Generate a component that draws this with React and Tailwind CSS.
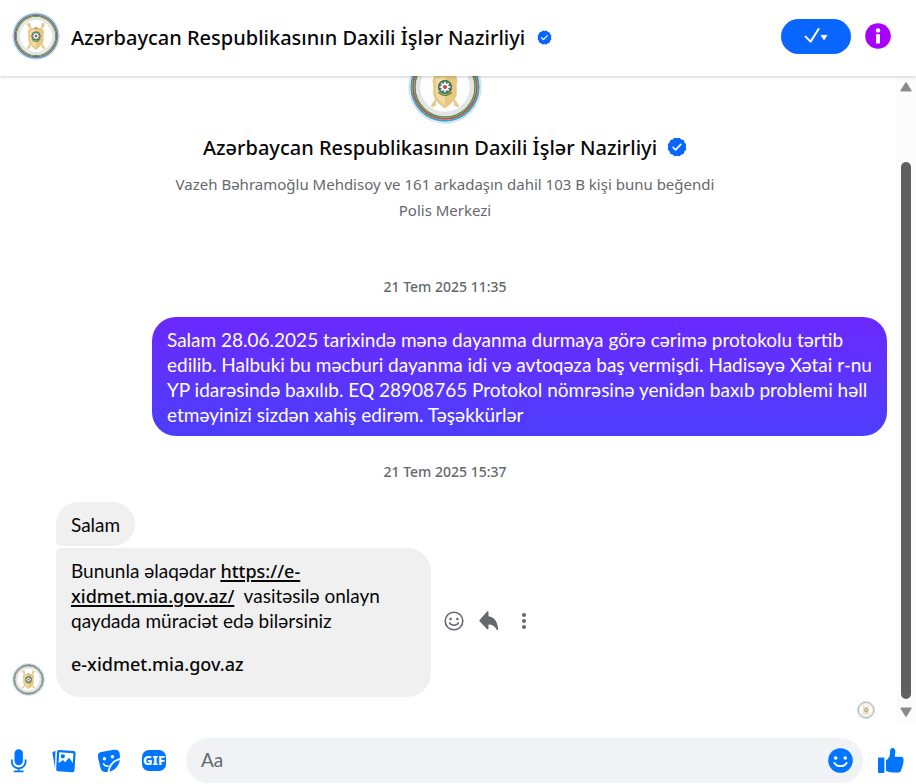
import React from "react";

const PAGE_NAME = "Azərbaycan Respublikasının Daxili İşlər Nazirliyi";

function Emblem({ className }) {
  const star = Array.from({ length: 8 }, (_, i) => i * 45);
  return (
    <svg viewBox="0 0 100 100" className={className} role="img" aria-label={PAGE_NAME}>
      <circle cx="50" cy="50" r="49.5" fill="#d3dbdf" />
      <circle cx="50" cy="50" r="48" fill="#eef3f5" />
      <circle cx="50" cy="50" r="45.5" fill="#fff" stroke="#35a3cf" strokeWidth="2.6" />
      <circle cx="50" cy="50" r="43" fill="none" stroke="#b9534b" strokeWidth="2.6" />
      <circle cx="50" cy="50" r="40.5" fill="none" stroke="#4f9b4c" strokeWidth="2.4" />
      <circle cx="50" cy="50" r="36.5" fill="#fff" stroke="#e4e4e6" strokeWidth="6" />
      <g stroke="#e3c583" strokeWidth="3" strokeLinecap="round">
        <path d="M34 26 67 75M66 26 33 75" />
      </g>
      <g fill="#e5c98c">
        <path d="m31 24 7-1 1 6-5 4zM69 24l-7-1-1 6 5 4zM31 77l3-7 5 3-3 3zM69 77l-3-7-5 3 3 3z" />
      </g>
      <path d="M35 35c5 0 9-2 15-4 6 2 10 4 15 4l2 7c-2 4-1 11-1 17-1 8-9 15-16 20-7-5-15-12-16-20 0-6 1-13-1-17z" fill="#e6c880" />
      <path d="M38 38c5 0 8-2 12-3v40c-6-5-12-10-12-17 0-6 0-12-1-16z" fill="#f1dba4" />
      <path d="M45 35h10l-5-3z" fill="#d26a52" />
      <circle cx="50" cy="50" r="9.5" fill="#315e4d" />
      <circle cx="50" cy="50" r="7.8" fill="#4f8f7c" />
      <g fill="#fff">
        {star.map((a) => (
          <path key={a} d="m50 41.5 2 5.5h-4z" transform={`rotate(${a} 50 50)`} />
        ))}
      </g>
      <circle cx="50" cy="50" r="4" fill="#fff" />
      <circle cx="50" cy="50" r="2.8" fill="#d6404f" />
      <path d="M41 57q9 9 18 0" fill="none" stroke="#5f7e3c" strokeWidth="2" />
    </svg>
  );
}

function Verified({ className }) {
  return (
    <svg viewBox="0 0 24 24" className={className} role="img" aria-label="Doğrulanmış hesap">
      <g fill="#0866ff">
        <circle cx="12" cy="12" r="10.6" />
        {[0, 30, 60].map((a) => (
          <rect key={a} x="3.4" y="3.4" width="17.2" height="17.2" rx="2" transform={`rotate(${a} 12 12)`} />
        ))}
      </g>
      <path d="m7.3 12.4 3 3 6.3-6.5" fill="none" stroke="#fff" strokeWidth="1.9" strokeLinecap="round" strokeLinejoin="round" />
    </svg>
  );
}

function Header() {
  return (
    <header className="relative z-10 flex h-[76px] shrink-0 items-center bg-white pr-[25px] pb-1 pl-3 shadow-[0_1px_3px_rgba(0,0,0,0.2)]">
      <Emblem className="size-12 shrink-0" />
      <h1 className="mt-[3px] ml-[11px] flex items-center gap-3 font-['Noto_Sans',sans-serif] text-[20px] font-medium whitespace-nowrap">
        {PAGE_NAME}
        <Verified className="size-[15px] shrink-0" />
      </h1>
      <button type="button" aria-label="Tamamlandı" className="ml-auto flex h-[35px] w-[70px] shrink-0 items-center justify-center rounded-full bg-[#0866ff]">
        <svg viewBox="0 0 24 16" className="h-4 w-6" aria-hidden="true">
          <path d="m1.6 8.6 5 5L14.6 1" fill="none" stroke="#fff" strokeWidth="2" strokeLinecap="round" strokeLinejoin="round" />
          <path d="M17 7.3h6l-3 4.6z" fill="#fff" stroke="#fff" strokeWidth=".7" strokeLinejoin="round" />
        </svg>
      </button>
      <button type="button" aria-label="Sohbet bilgileri" className="ml-3.5 size-[26px] shrink-0">
        <svg viewBox="0 0 26 26" className="size-full" aria-hidden="true">
          <circle cx="13" cy="13" r="12.8" fill="#a800ff" />
          <circle cx="13" cy="7.4" r="2.2" fill="#fff" />
          <path d="M11 11.2h4v9.3h-4z" fill="#fff" />
        </svg>
      </button>
    </header>
  );
}

function Intro() {
  return (
    <section className="flex shrink-0 flex-col items-center text-center font-['Noto_Sans',sans-serif]">
      <Emblem className="size-[74px]" />
      <h2 className="mt-[7px] flex h-8 items-center gap-2.5 text-[20px] font-medium whitespace-nowrap">
        {PAGE_NAME}
        <Verified className="size-5" />
      </h2>
      <p className="mt-2 text-[15px] leading-[26px] text-[#65686c]">
        Vazeh Bəhramoğlu Mehdisoy ve 161 arkadaşın dahil 103 B kişi bunu beğendi
      </p>
      <p className="text-[15px] leading-[26px] text-[#65686c]">Polis Merkezi</p>
    </section>
  );
}

function Stamp({ children, className }) {
  return <time className={`block shrink-0 text-center font-['Noto_Sans',sans-serif] text-[14px] leading-5 font-medium text-[#65686c] ${className}`}>{children}</time>;
}

function MessageActions() {
  return (
    <div className="ml-3 flex items-center gap-[13px] pb-[3px] text-[#65686c]">
      <button type="button" aria-label="İfade bırak" className="size-[22px]">
        <svg viewBox="0 0 22 22" className="size-full" fill="none" stroke="currentColor" aria-hidden="true">
          <circle cx="11" cy="11" r="8.8" strokeWidth="1.6" />
          <g fill="currentColor" stroke="none">
            <circle cx="7.6" cy="9" r="1.3" />
            <circle cx="14.4" cy="9" r="1.3" />
          </g>
          <path d="M6.6 12.9c1.7 3.2 7.1 3.2 8.8 0" strokeWidth="1.5" strokeLinecap="round" />
        </svg>
      </button>
      <button type="button" aria-label="Yanıtla" className="size-[22px]">
        <svg viewBox="0 0 22 22" className="size-full" fill="currentColor" aria-hidden="true">
          <path d="M10.5 2.4v3.9c5.4.7 9.2 4.6 9.6 13.1.1.9-.9 1.1-1.3.4-1.8-3.5-4.5-5.1-8.3-5.2v3.7c0 1-.9 1.4-1.6.8L1.8 11.5c-.6-.6-.6-1.1 0-1.7l7.1-8.1c.6-.7 1.6-.3 1.6.7z" />
        </svg>
      </button>
      <button type="button" aria-label="Daha fazla" className="size-[22px]">
        <svg viewBox="0 0 22 22" className="size-full" fill="currentColor" aria-hidden="true">
          <circle cx="11" cy="5" r="2" />
          <circle cx="11" cy="11" r="2" />
          <circle cx="11" cy="17" r="2" />
        </svg>
      </button>
    </div>
  );
}

function Thread() {
  return (
    <div className="flex min-w-0 flex-1 flex-col justify-end overflow-hidden pr-1.5 text-[19px] leading-[25px]">
      <Intro />
      <Stamp className="mt-[54px]">21 Tem 2025 11:35</Stamp>
      <div className="mt-5 mr-[3px] ml-[152px] shrink-0 self-end rounded-[24px] bg-linear-to-b from-[#6a28ff] to-[#4c3dfb] px-[15px] pt-[10px] pb-[9px] text-white">
        <p>
          Salam 28.06.2025 tarixində mənə dayanma durmaya görə cərimə protokolu tərtib edilib. Halbuki bu məcburi dayanma idi və avtoqəza baş vermişdi. Hadisəyə Xətai <span className="whitespace-nowrap">r-nu</span> YP idarəsində baxılıb. EQ 28908765 Protokol nömrəsinə yenidən baxıb problemi həll etməyinizi sizdən xahiş edirəm. Təşəkkürlər
        </p>
      </div>
      <Stamp className="mt-[26px]">21 Tem 2025 15:37</Stamp>
      <div className="mt-5 flex shrink-0 items-end pl-3">
        <Emblem className="mb-px size-[33px] shrink-0" />
        <div className="ml-[11px] flex flex-col items-start gap-0.5">
          <p className="rounded-[22px] rounded-bl-[5px] bg-[#f0f0f0] px-[15px] pt-[10px] pb-[9px]">Salam</p>
          <div className="flex items-center">
            <div className="w-[375px] rounded-[24px] rounded-tl-[5px] bg-[#f0f0f0] px-[15px] pt-[10px] pb-5">
              <p>
                Bununla əlaqədar{" "}
                <a href="https://e-xidmet.mia.gov.az/" className="font-['Noto_Sans',sans-serif] text-[18px] leading-none font-medium underline decoration-2 underline-offset-2">
                  https://e-<wbr />xidmet.mia.gov.az/
                </a>
                &nbsp; vasitəsilə onlayn qaydada müraciət edə bilərsiniz
              </p>
              <a href="https://e-xidmet.mia.gov.az/" className="mt-[19px] block font-['Noto_Sans',sans-serif] text-[18px] font-medium">e-xidmet.mia.gov.az</a>
            </div>
            <MessageActions />
          </div>
        </div>
      </div>
      <Emblem className="mt-1 mr-[15px] mb-1 size-[18px] shrink-0 self-end opacity-70" />
    </div>
  );
}

function Scrollbar() {
  return (
    <div className="flex w-5 shrink-0 flex-col items-center bg-[#fcfcfc] py-1.5" aria-hidden="true">
      <svg viewBox="0 0 12 10" className="h-2.5 w-3 shrink-0">
        <path d="M6 1 11 8.8H1z" fill="#8b8b8b" stroke="#8b8b8b" strokeWidth="1.4" strokeLinejoin="round" />
      </svg>
      <div className="mt-[70px] mb-2 w-2.5 flex-1 rounded-full bg-[#606060]" />
      <svg viewBox="0 0 12 10" className="h-2.5 w-3 shrink-0">
        <path d="M6 9 1 1.2h10z" fill="#8b8b8b" stroke="#8b8b8b" strokeWidth="1.4" strokeLinejoin="round" />
      </svg>
    </div>
  );
}

function Composer() {
  return (
    <footer className="flex h-[61px] shrink-0 items-center bg-white pt-3.5 pr-3 pl-[7px]">
      <div className="flex items-center gap-[21px]">
        <button type="button" aria-label="Sesli mesaj" className="size-6">
          <svg viewBox="0 0 24 24" className="size-full" fill="#0075ff" aria-hidden="true">
            <rect x="7.5" y=".3" width="8.4" height="16" rx="4.2" />
            <path d="M4.8 11.2v1.2a6.9 6.9 0 0 0 13.8 0v-1.2M11.7 19.2v3M7.6 22.4h8.2" fill="none" stroke="#0075ff" strokeWidth="1.8" strokeLinecap="round" />
          </svg>
        </button>
        <button type="button" aria-label="Dosya ekle" className="size-6">
          <svg viewBox="0 0 24 24" className="size-full" fill="#0075ff" aria-hidden="true">
            <path d="M3.4 2.1 1.7 2.4C.8 2.6.3 3.3.5 4.2l2.5 15z" />
            <path fillRule="evenodd" d="M7.1.9 21.6 2c1.2.1 2 1 2 2.2l-1.1 17.1c-.1 1.2-1 2-2.2 1.9L6.1 22.3c-1.2-.1-2-1-1.9-2.2L5 2.8C5 1.6 5.9.8 7.1.9zm.6 2.3c-.4 0-.6.2-.6.6l-.5 10.4 4.1-2.9c.3-.2.6-.2.9.1l1.6 1.9 3.3-4c.4-.4.8-.4 1.1.1l3.2 4.7.6-9.2c0-.4-.2-.7-.6-.7zm3.1 2a2.1 2.1 0 1 1 0 4.2 2.1 2.1 0 0 1 0-4.2z" />
          </svg>
        </button>
        <button type="button" aria-label="Çıkartma seç" className="size-6">
          <svg viewBox="0 0 24 24" className="size-full" fill="#0075ff" aria-hidden="true">
            <path d="M4.3 2.9 16.6.8c3.3-.6 5.3.4 5.9 3.2.4 1.8.5 3.4.4 5-6.9 1.6-11.1 6.3-12.4 13.9l-1.3.1c-3.4.1-5-1-5.8-4.4L1.2 9.4C.5 5.6 1.2 3.4 4.3 2.9z" />
            <path d="M12.5 22.8c1-6.1 4.4-10.4 10.3-11.9-.7 5.8-4.4 10-10.3 11.9z" />
            <g fill="#fff">
              <circle cx="7.4" cy="9.8" r="1.7" />
              <circle cx="15.4" cy="7.7" r="1.7" />
            </g>
            <path d="M6.6 14.8c1 2 2.4 2.7 4.4 2.2" fill="none" stroke="#fff" strokeWidth="1.7" strokeLinecap="round" />
          </svg>
        </button>
        <button type="button" aria-label="GIF seç" className="flex h-[21px] w-6 items-center justify-center rounded-[7px] bg-[#0075ff] font-['Noto_Sans',sans-serif] text-[13px] leading-none font-extrabold text-white">
          GIF
        </button>
      </div>
      <label className="ml-5 flex h-[45px] min-w-0 flex-1 items-center rounded-full bg-[#f0f2f5] pr-2.5 pl-[15px]">
        <input type="text" aria-label="Mesaj" placeholder="Aa" className="min-w-0 flex-1 bg-transparent text-[19px] text-[#080809] outline-none placeholder:text-[#65686c]" />
        <button type="button" aria-label="Emoji seç" className="size-[25px] shrink-0">
          <svg viewBox="0 0 26 26" className="size-full" aria-hidden="true">
            <circle cx="13" cy="13" r="12.8" fill="#0075ff" />
            <circle cx="8" cy="10.4" r="1.9" fill="#fff" />
            <circle cx="18" cy="10.4" r="1.9" fill="#fff" />
            <path d="M6.7 15.5c2.5 4.4 10.1 4.4 12.6 0" fill="none" stroke="#fff" strokeWidth="2" strokeLinecap="round" />
          </svg>
        </button>
      </label>
      <button type="button" aria-label="Beğen" className="ml-[15px] size-[26px] shrink-0">
        <svg viewBox="0 0 26 26" className="size-full" fill="#0075ff" aria-hidden="true">
          <rect y="9.6" width="6.4" height="15.4" rx="1" />
          <path d="M8 12.2c2.8-1.7 4.2-4.4 4-8.2-.1-2.3.9-4 2.5-4 2.3 0 3.2 2.3 2.7 5.3L16.8 8.8h6.1c2 0 3.1 1.6 2.4 3.1.5.9.5 2-.3 2.9.4 1.2.2 2.4-.7 3.2.3 1.2 0 2.3-1 3 .1 2.1-.9 3.5-3.4 3.5h-5.2c-2.7 0-4.6-.5-6.7-1.7z" />
        </svg>
      </button>
    </footer>
  );
}

export default function App() {
  return (
    <div className="flex h-screen flex-col bg-white font-['Lato','Noto_Sans',sans-serif] text-[#080809]">
      <Header />
      <main className="flex min-h-0 flex-1">
        <Thread />
        <Scrollbar />
      </main>
      <Composer />
    </div>
  );
}
